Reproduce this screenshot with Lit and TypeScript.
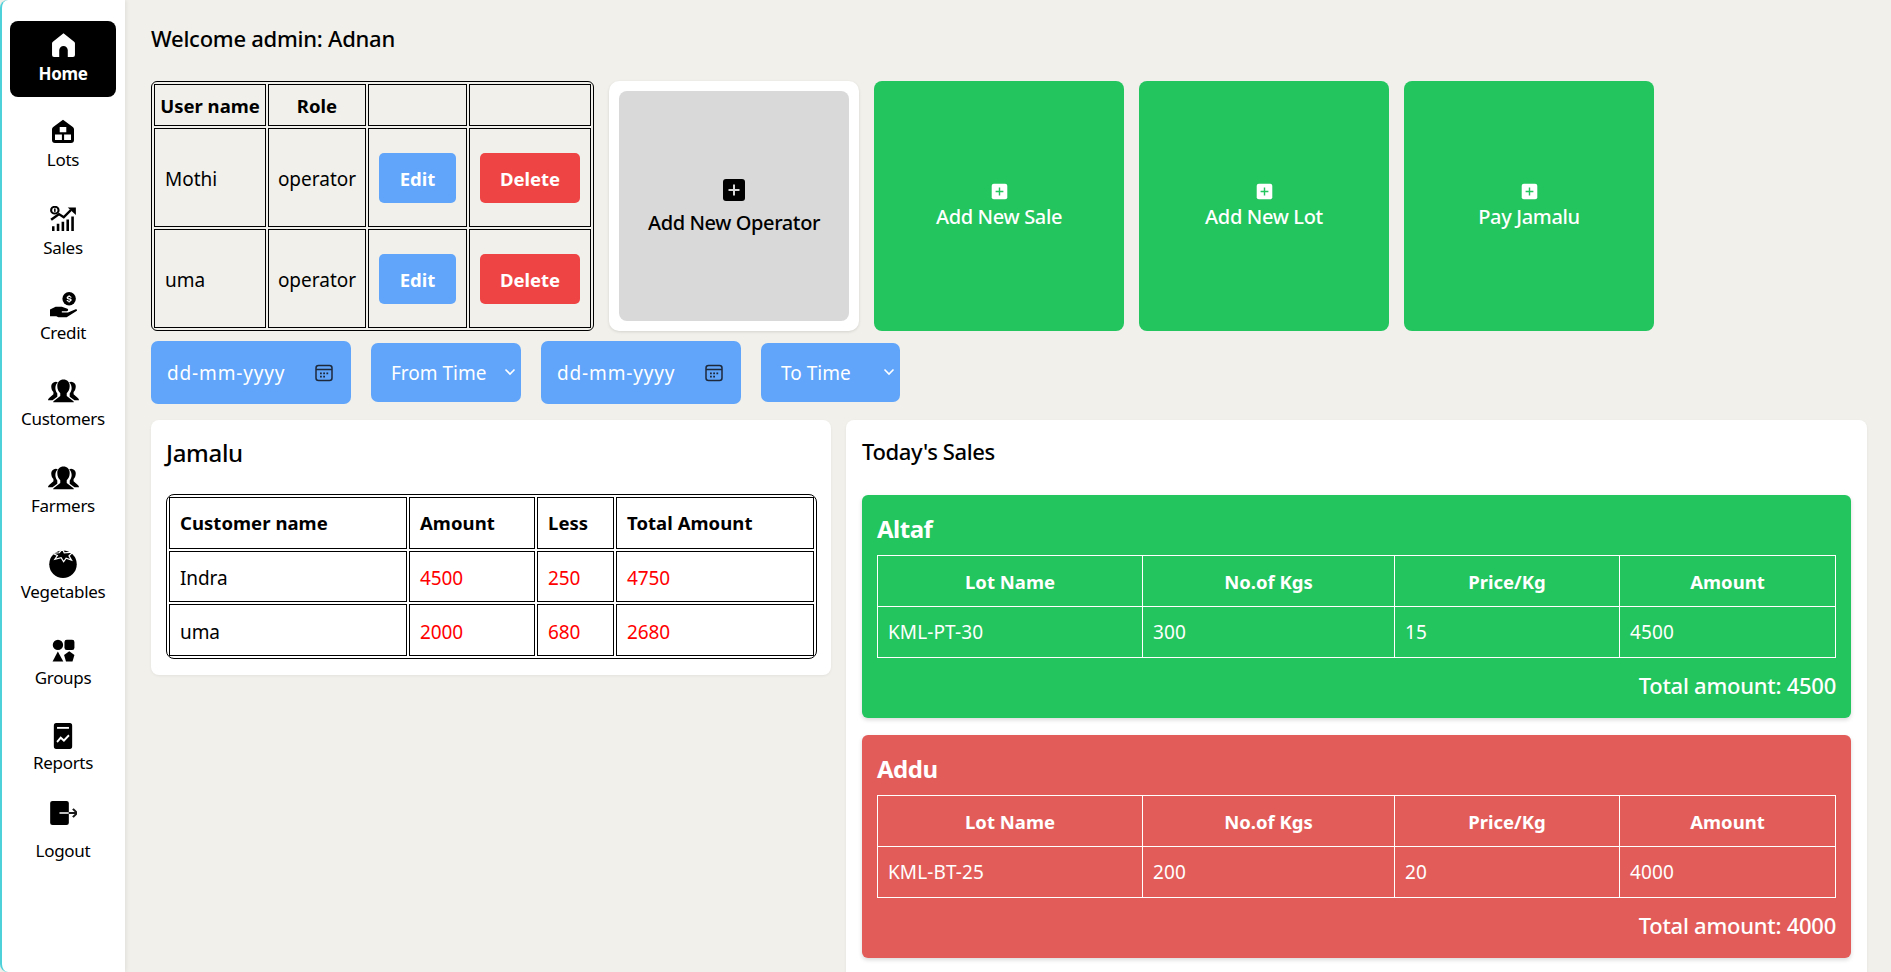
import { LitElement, html, css, svg } from "lit";
import { customElement } from "lit/decorators.js";

const icons: Record<string, unknown> = {
  home: svg`<path d="M12 1.200 22.200 9.300c.5.4.8 1 .8 1.600V22a1.900 1.900 0 0 1-1.900 1.900h-5V17.600a4.100 4.100 0 0 0-8.200 0v6.300h-5A1.900 1.900 0 0 1 1 22V10.900c0-.6.3-1.200.8-1.600Z"/>`,
  lots: svg`<path fill-rule="evenodd" d="M12 .8 21.800 8c.8.6 1.200 1.400 1.200 2.300V21a3 3 0 0 1-3 3H4a3 3 0 0 1-3-3V10.300C1 9.400 1.400 8.600 2.200 8ZM8.700 8v5.300h6.600V8ZM4 15.500V21h6.900v-5.500ZM13.100 15.500V21H20v-5.500Z"/>`,
  sales: svg`<circle cx="4.300" cy="4" r="3.300" fill="none" stroke="currentColor" stroke-width="1.900"/><rect x="3.600" y="2.400" width="1.400" height="3.200"/><path d="M1 13.200 8 7.800l4.200 3 6.400-7" fill="none" stroke="currentColor" stroke-width="2.200"/><path d="M15.800 1.500H23V8.600Z"/><path d="M1.800 19.500h2.200v5H1.800ZM6 17h2.300v7.500H6ZM10.300 15h2.300v9.500h-2.300ZM14.600 13h2.300v11.500h-2.300ZM18.900 10h2.300v14.500h-2.300Z"/>`,
  credit: svg`<circle cx="17" cy="6" r="6"/><path d="M16.500 2.800h1v.8c.9.100 1.600.6 1.700 1.400h-1.100c-.1-.4-.4-.5-1-.5-.5 0-.9.200-.9.500s.3.400 1 .6c1.200.2 2.100.600 2.100 1.600 0 .8-.7 1.300-1.800 1.400v.8h-1v-.8c-1-.1-1.700-.6-1.800-1.500h1.100c.1.400.5.600 1.100.6s1-.2 1-.5-.4-.5-1.100-.6c-1.100-.2-2-.6-2-1.600 0-.8.7-1.300 1.700-1.400Z" fill="#fff"/><path d="M0 15.500 5 13h5.500l5 1.800c1.100.5.7 2.200-.6 2.200H10.500v1.200h5.500l6.800-2.900c1.100-.4 1.700 1 .8 1.600L14.800 22.500H7.500L5.600 21.500H0Z"/>`,
  people: svg`<path d="M6.100 2.500a3.900 3.900 0 0 0-3.600 4.100c0 2.300.7 4.300 1.700 5.500v2L.9 17.500c-.6.500-.9 1.200-.9 2h3.500L7.200 16.300v-3C6 11.500 5.700 9.800 5.700 8.300c0-2.200.7-4 1.900-5.400a4 4 0 0 0-1.500-.4ZM17.900 2.500a4 4 0 0 0-1.500.4c1.200 1.400 1.900 3.200 1.900 5.400 0 1.500-.3 3.200-1.500 5v3L20.500 19.500H24c0-.8-.3-1.500-.9-2l-3.300-3.400v-2c1-1.200 1.700-3.200 1.700-5.500a3.900 3.900 0 0 0-3.600-4.100Z"/><path d="M12 .5c-2.800 0-4.800 2.300-4.800 6 0 2.800.9 5.200 2.300 6.600v2.600l-5 4.500c-.3.300-.5.700-.5 1.300h16c0-.6-.2-1-.5-1.300l-5-4.500v-2.600c1.400-1.400 2.300-3.800 2.300-6.600 0-3.700-2-6-4.800-6Z"/>`,
  tomato: svg`<circle cx="12" cy="13" r="11"/><path d="M11.500 .8 13 3.800 19.800 3.300 16.800 6.200 18.800 9.700 14.500 8.200 12.500 11 10.500 7.800 5.500 9 7.500 6 3.500 4.200 9 3.800Z" fill="#000" stroke="#fff" stroke-width="1"/>`,
  groups: svg`<circle cx="6.200" cy="6.200" r="5.400"/><rect x="13" y=".8" width="10.400" height="10.800" rx="2.400"/><path d="M6.100 13 11.800 23.400H.6Z"/><path d="M18 12.800 23.400 16.800 21.400 23.400H14.600L12.600 16.800Z"/>`,
  reports: svg`<path fill-rule="evenodd" d="M4.500 0h15a2.500 2.500 0 0 1 2.500 2.500v19a2.500 2.500 0 0 1-2.500 2.500h-15A2.500 2.500 0 0 1 2 21.500v-19A2.500 2.500 0 0 1 4.500 0Z"/><path d="M5.500 4.500h13" stroke="#fff" stroke-width="1.700" fill="none"/><path d="M5.500 17.500l4-4 3.500 2.800 5.500-5" stroke="#fff" stroke-width="2" fill="none"/>`,
  logout: svg`<rect x="1" y="0" width="16" height="24" rx="2"/><path d="M9 12h8" stroke="#fff" stroke-width="1.500" fill="none"/><path d="M17 12h7M20.500 7.800l3.600 4.200-3.600 4.200" stroke="#1a1a1a" stroke-width="1.800" fill="none"/>`,
};

const nav = [
  ["Home", "home", "m-home"],
  ["Lots", "lots", "m-lots"],
  ["Sales", "sales", "m-sales"],
  ["Credit", "credit", "m-credit"],
  ["Customers", "people", "m-people"],
  ["Farmers", "people", "m-people"],
  ["Vegetables", "tomato", "m-tomato"],
  ["Groups", "groups", "m-groups"],
  ["Reports", "reports", "m-reports"],
  ["Logout", "logout", "m-logout"],
];

const operators = [["Mothi", "operator"], ["uma", "operator"]];
const jamalu = [["Indra", "4500", "250", "4750"], ["uma", "2000", "680", "2680"]];
const sales = [
  { name: "Altaf", tone: "green", lot: "KML-PT-30", kgs: "300", price: "15", amount: "4500" },
  { name: "Addu", tone: "red", lot: "KML-BT-25", kgs: "200", price: "20", amount: "4000" },
];

const plus = (cls: string) => html`<svg class=${cls} viewBox="0 0 24 24"><rect x="1" y="1" width="22" height="22" rx="3" fill="currentColor"/><path d="M12 6.500v11M6.500 12h11" stroke="var(--plus)" stroke-width="2" fill="none"/></svg>`;
const calendar = html`<svg class="cal" viewBox="0 0 18 18"><rect x="1" y="1.500" width="16" height="15" rx="2.500" fill="none" stroke="#1e293b" stroke-width="1.500"/><path d="M1 5.500h16" stroke="#1e293b" stroke-width="1.500"/><path d="M5 8.500h1.800v1.800H5ZM8.200 8.500H10v1.800H8.200ZM11.400 8.500h1.800v1.800h-1.800ZM5 11.800h1.800v1.800H5ZM8.200 11.800H10v1.800H8.200Z" fill="#1e293b"/></svg>`;
const chevron = html`<svg class="chev" viewBox="0 0 12 8"><path d="M1.500 1.500 6 6l4.500-4.500" fill="none" stroke="#fff" stroke-width="1.600"/></svg>`;

@customElement("app-root")
export class AppRoot extends LitElement {
  static styles = css`
    :host { display: block; height: 972px; overflow: hidden; background: #f1f0eb; color: #000;
      font-family: "Noto Sans", sans-serif; }
    * { box-sizing: border-box; }
    .shell { display: flex; height: 972px; }
    .side { width: 125px; flex: none; background: #fff; border-left: 2px solid #4fd1d9; border-radius: 8px 0 0 8px;
      padding: 21px 9px 0 8px; display: flex; flex-direction: column; gap: 10.35px; box-shadow: 1px 0 4px rgba(0,0,0,.08); }
    .item { height: 76px; border-radius: 8px; display: flex; flex-direction: column; align-items: center;
      font-size: 17px; line-height: 22px; letter-spacing: -.3px; white-space: nowrap; }
    .item svg { fill: currentColor; display: block; }
    .item.active { background: #000; color: #fff; font-weight: 700; }
    .m-home svg { width: 25px; height: 25px; margin: 11px 0 6px; }
    .m-lots svg { width: 24px; height: 24px; margin: 12px 0 6px; }
    .m-sales svg { width: 27px; height: 25px; margin: 12px 0 6px; }
    .m-credit svg { width: 27px; height: 27px; margin: 12px 0 3px; }
    .m-people svg { width: 31px; height: 26px; margin: 13px 0 3px; }
    .m-tomato svg { width: 30px; height: 30px; margin: 9px 0 3px; }
    .m-groups svg { width: 23px; height: 23px; margin: 14px 0 5px; }
    .m-reports svg { width: 22px; height: 26px; margin: 11px 0 3px; }
    .m-logout svg { width: 28px; height: 24px; margin: 3px 0 15px; }

    .main { flex: 1; min-width: 0; padding: 0 24px 0 26px; }
    .welcome { height: 81px; padding-top: 24px; font-size: 22px; line-height: 28px; font-weight: 500; letter-spacing: -.25px; }

    .top { display: flex; gap: 15px; height: 250px; }
    table { border-collapse: separate; }
    .ops { width: 443px; height: 250px; border: 1px solid #000; border-radius: 6px; border-spacing: 2px; table-layout: fixed; font-size: 19px; flex: none; }
    .ops th, .ops td { border: 1px solid #000; padding: 0; }
    .ops th { height: 42px; font-weight: 700; font-size: 18.500px; }
    .ops td { height: 99px; }
    .ops .name { padding: 2px 0 0 10px; }
    .ops .role { padding-top: 2px; text-align: center; }
    .w1 { width: 112px; } .w2 { width: 98px; } .w3 { width: 99px; } .w4 { width: 122px; }
    .cell { display: flex; justify-content: center; }
    .btn { height: 50px; border-radius: 5px; color: #fff; font-weight: 700; font-size: 18.500px; padding-top: 1px; display: flex; align-items: center; justify-content: center; }
    .edit { width: 77px; background: #60a5fa; }
    .del { width: 100px; background: #ef4444; }

    .op-wrap { width: 250px; flex: none; padding: 10px; background: #fff; border-radius: 10px; box-shadow: 0 1px 3px rgba(0,0,0,.12); }
    .op { height: 230px; background: #d9d9d9; border-radius: 8px; padding-top: 5px; display: flex; flex-direction: column; align-items: center;
      justify-content: center; font-size: 20px; line-height: 32px; font-weight: 500; letter-spacing: -.4px; --plus: #d9d9d9; }
    .i-op { width: 24px; height: 24px; margin-bottom: 4.500px; }
    .tile { width: 250px; flex: none; background: #22c55e; color: #fff; border-radius: 8px; padding-top: 1px; display: flex; flex-direction: column; align-items: center;
      justify-content: center; font-size: 20px; line-height: 28px; font-weight: 500; letter-spacing: -.35px; --plus: #22c55e; }
    .i-tile { width: 17px; height: 17px; margin-bottom: 3px; }

    .filters { display: flex; gap: 20px; align-items: center; height: 63px; margin-top: 10px; }
    .field { background: #60a5fa; color: #fff; border-radius: 7px; display: flex; align-items: center; font-size: 19px; }
    .date { width: 200px; height: 63px; padding: 0 18px 0 16px; justify-content: space-between; letter-spacing: .85px; }
    .sel { height: 59px; padding: 0 5px 0 20px; justify-content: space-between; }
    .s1 { width: 150px; } .s2 { width: 139px; }
    .cal { width: 18px; height: 18px; }
    .chev { width: 12px; height: 8px; margin-bottom: 2px; }

    .panels { display: grid; grid-template-columns: 680px 1fr; gap: 15px; align-items: start; margin-top: 16px; }
    .panel { background: #fff; border-radius: 8px; padding: 15px; box-shadow: 0 1px 3px rgba(0,0,0,.06); }
    .sp { padding: 15px 16px; }
    .jam { height: 255px; }
    .jam h2 { margin: 0 0 27px; font-size: 24px; line-height: 29px; font-weight: 500; letter-spacing: -.3px; padding-top: 3px; }
    .jt { width: 649px; height: 165px; border: 1px solid #000; border-radius: 8px; border-spacing: 2px; table-layout: fixed; font-size: 19px; letter-spacing: -.1px; }
    .jt th, .jt td { border: 1px solid #000; padding: 0 0 0 10px; text-align: left; height: 51px; }
    .jt td { padding-top: 3px; }
    .jt th { font-size: 18.500px; letter-spacing: .05px; }
    .jt .red { color: #f00; }
    .j1 { width: 238px; } .j2 { width: 126px; } .j3 { width: 77px; } .j4 { width: 198px; }
    .sp h2 { margin: 0 0 29px; font-size: 22px; line-height: 29px; font-weight: 500; letter-spacing: -.4px; padding-top: 2px; }
    .sale { color: #fff; border-radius: 6px; padding: 16px 15px; height: 223px; box-shadow: 0 2px 4px rgba(0,0,0,.15); margin-bottom: 17px; }
    .green { background: #22c55e; }
    .red-card { background: #e25c5a; }
    .sale h3 { margin: 0; font-size: 24px; line-height: 27px; height: 44px; padding-top: 4px; font-weight: 700; letter-spacing: -.5px; }
    .st { width: 100%; height: 103px; border-collapse: collapse; table-layout: fixed; font-size: 19px; letter-spacing: .1px; }
    .st th, .st td { border: 1px solid #fff; height: 51px; padding: 0; }
    .st th { font-size: 18.500px; letter-spacing: 0; }
    .st td { padding-left: 10px; }
    .c1 { width: 265px; } .c2 { width: 252px; } .c3 { width: 225px; }
    .total { text-align: right; font-size: 22px; line-height: 30px; margin-top: 12px; font-weight: 500; letter-spacing: -.25px; }
  `;

  render() {
    return html`<div class="shell">
      <nav class="side">
        ${nav.map(([label, icon, cls], i) => html`<div class="item ${cls} ${i === 0 ? "active" : ""}"><svg viewBox="0 0 24 24" preserveAspectRatio="none">${icons[icon]}</svg><span>${label}</span></div>`)}
      </nav>
      <main class="main">
        <div class="welcome">Welcome admin: Adnan</div>
        <div class="top">
          <table class="ops">
            <colgroup><col class="w1" /><col class="w2" /><col class="w3" /><col class="w4" /></colgroup>
            <tr><th>User name</th><th>Role</th><th></th><th></th></tr>
            ${operators.map(([n, r]) => html`<tr><td class="name">${n}</td><td class="role">${r}</td>
              <td><div class="cell"><div class="btn edit">Edit</div></div></td>
              <td><div class="cell"><div class="btn del">Delete</div></div></td></tr>`)}
          </table>
          <div class="op-wrap"><div class="op">${plus("i-op")}<span>Add New Operator</span></div></div>
          ${["Add New Sale", "Add New Lot", "Pay Jamalu"].map((t) => html`<div class="tile">${plus("i-tile")}<span>${t}</span></div>`)}
        </div>
        <div class="filters">
          <div class="field date"><span>dd-mm-yyyy</span>${calendar}</div>
          <div class="field sel s1"><span>From Time</span>${chevron}</div>
          <div class="field date"><span>dd-mm-yyyy</span>${calendar}</div>
          <div class="field sel s2"><span>To Time</span>${chevron}</div>
        </div>
        <div class="panels">
          <section class="panel jam">
            <h2>Jamalu</h2>
            <table class="jt">
              <colgroup><col class="j1" /><col class="j2" /><col class="j3" /><col class="j4" /></colgroup>
              <tr><th>Customer name</th><th>Amount</th><th>Less</th><th>Total Amount</th></tr>
              ${jamalu.map(([n, a, l, t]) => html`<tr><td>${n}</td><td class="red">${a}</td><td class="red">${l}</td><td class="red">${t}</td></tr>`)}
            </table>
          </section>
          <section class="panel sp">
            <h2>Today's Sales</h2>
            ${sales.map((s) => html`<div class="sale ${s.tone === "green" ? "green" : "red-card"}">
              <h3>${s.name}</h3>
              <table class="st">
                <colgroup><col class="c1" /><col class="c2" /><col class="c3" /><col /></colgroup>
                <tr><th>Lot Name</th><th>No.of Kgs</th><th>Price/Kg</th><th>Amount</th></tr>
                <tr><td>${s.lot}</td><td>${s.kgs}</td><td>${s.price}</td><td>${s.amount}</td></tr>
              </table>
              <div class="total">Total amount: ${s.amount}</div>
            </div>`)}
          </section>
        </div>
      </main>
    </div>`;
  }
}
